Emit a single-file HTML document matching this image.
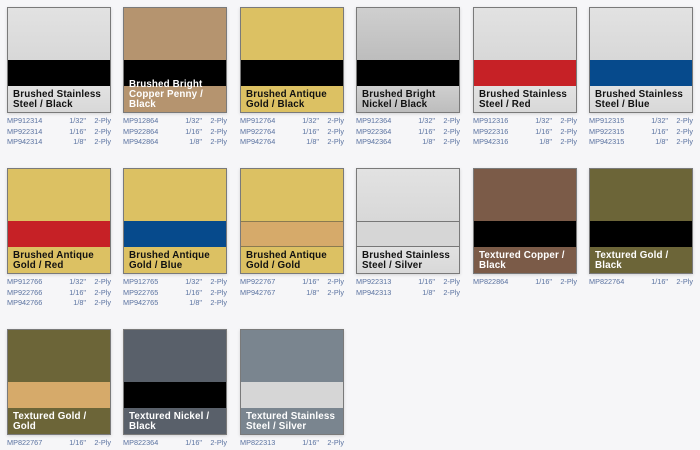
<!DOCTYPE html>
<html><head><meta charset="utf-8"><style>
body{margin:0;width:700px;height:450px;background:#f6f6f8;position:relative;overflow:hidden;font-family:"Liberation Sans",sans-serif}
.t{position:absolute;width:102px;height:104px;border:1px solid #7a7a7a;box-shadow:0 1px 3px rgba(0,0,0,.15);overflow:hidden}
.top{position:absolute;left:0;top:0;width:100%;height:52px}
.band{position:absolute;left:0;top:52px;width:100%;height:26px}
.bot{position:absolute;left:0;top:78px;width:100%;height:26px}
.lab{position:absolute;left:5px;bottom:2px;font-weight:bold;font-size:9.8px;line-height:10px;color:#111;letter-spacing:.15px}
.w{color:#fff}
.i{position:absolute;width:104px;font-size:7.3px;color:#5a72a0;line-height:10.5px}
.i div{position:relative;height:10.5px}
.i span{position:absolute}
.a{left:0}.b{right:25px}.c{right:0}
.ss{background:linear-gradient(#e2e2e2,#d8d8d8)}
.cp{background:#b5946f}
.gd{background:#dcc163}
.nk{background:linear-gradient(#cfcfcf,#bdbdbd)}
.bk{background:#000}
.tc{background:#7b5b48}
.tg{background:#6c6538}
.tn{background:#59606a}
.ts{background:#7a858f}
</style></head><body>

<div class="t" style="left:7px;top:7px"><div class="top ss"></div><div class="band bk"></div><div class="bot ss"></div><div class="lab">Brushed Stainless<br>Steel / Black</div></div>
<div class="t" style="left:123px;top:7px"><div class="top cp"></div><div class="band bk"></div><div class="bot cp"></div><div class="lab w">Brushed Bright<br>Copper Penny /<br>Black</div></div>
<div class="t" style="left:240px;top:7px"><div class="top gd"></div><div class="band bk"></div><div class="bot gd"></div><div class="lab">Brushed Antique<br>Gold / Black</div></div>
<div class="t" style="left:356px;top:7px"><div class="top nk"></div><div class="band bk"></div><div class="bot nk"></div><div class="lab">Brushed Bright<br>Nickel / Black</div></div>
<div class="t" style="left:473px;top:7px"><div class="top ss"></div><div class="band" style="background:#c62126"></div><div class="bot ss"></div><div class="lab">Brushed Stainless<br>Steel / Red</div></div>
<div class="t" style="left:589px;top:7px"><div class="top ss"></div><div class="band" style="background:#064a8c"></div><div class="bot ss"></div><div class="lab">Brushed Stainless<br>Steel / Blue</div></div>

<div class="i" style="left:7px;top:116px"><div><span class="a">MP912314</span><span class="b">1/32"</span><span class="c">2-Ply</span></div><div><span class="a">MP922314</span><span class="b">1/16"</span><span class="c">2-Ply</span></div><div><span class="a">MP942314</span><span class="b">1/8"</span><span class="c">2-Ply</span></div></div>
<div class="i" style="left:123px;top:116px"><div><span class="a">MP912864</span><span class="b">1/32"</span><span class="c">2-Ply</span></div><div><span class="a">MP922864</span><span class="b">1/16"</span><span class="c">2-Ply</span></div><div><span class="a">MP942864</span><span class="b">1/8"</span><span class="c">2-Ply</span></div></div>
<div class="i" style="left:240px;top:116px"><div><span class="a">MP912764</span><span class="b">1/32"</span><span class="c">2-Ply</span></div><div><span class="a">MP922764</span><span class="b">1/16"</span><span class="c">2-Ply</span></div><div><span class="a">MP942764</span><span class="b">1/8"</span><span class="c">2-Ply</span></div></div>
<div class="i" style="left:356px;top:116px"><div><span class="a">MP912364</span><span class="b">1/32"</span><span class="c">2-Ply</span></div><div><span class="a">MP922364</span><span class="b">1/16"</span><span class="c">2-Ply</span></div><div><span class="a">MP942364</span><span class="b">1/8"</span><span class="c">2-Ply</span></div></div>
<div class="i" style="left:473px;top:116px"><div><span class="a">MP912316</span><span class="b">1/32"</span><span class="c">2-Ply</span></div><div><span class="a">MP922316</span><span class="b">1/16"</span><span class="c">2-Ply</span></div><div><span class="a">MP942316</span><span class="b">1/8"</span><span class="c">2-Ply</span></div></div>
<div class="i" style="left:589px;top:116px"><div><span class="a">MP912315</span><span class="b">1/32"</span><span class="c">2-Ply</span></div><div><span class="a">MP922315</span><span class="b">1/16"</span><span class="c">2-Ply</span></div><div><span class="a">MP942315</span><span class="b">1/8"</span><span class="c">2-Ply</span></div></div>

<div class="t" style="left:7px;top:168px"><div class="top gd"></div><div class="band" style="background:#c62126"></div><div class="bot gd"></div><div class="lab">Brushed Antique<br>Gold / Red</div></div>
<div class="t" style="left:123px;top:168px"><div class="top gd"></div><div class="band" style="background:#064a8c"></div><div class="bot gd"></div><div class="lab">Brushed Antique<br>Gold / Blue</div></div>
<div class="t" style="left:240px;top:168px"><div class="top gd"></div><div class="band" style="background:#d6aa6a;border-top:1px solid #8a7a50;border-bottom:1px solid #8a7a50;box-sizing:border-box"></div><div class="bot gd"></div><div class="lab">Brushed Antique<br>Gold / Gold</div></div>
<div class="t" style="left:356px;top:168px"><div class="top ss"></div><div class="band" style="background:#d6d6d6;border-top:1px solid #777;border-bottom:1px solid #777;box-sizing:border-box"></div><div class="bot ss"></div><div class="lab">Brushed Stainless<br>Steel / Silver</div></div>
<div class="t" style="left:473px;top:168px"><div class="top tc"></div><div class="band bk"></div><div class="bot tc"></div><div class="lab w">Textured Copper /<br>Black</div></div>
<div class="t" style="left:589px;top:168px"><div class="top tg"></div><div class="band bk"></div><div class="bot tg"></div><div class="lab w">Textured Gold /<br>Black</div></div>

<div class="i" style="left:7px;top:277px"><div><span class="a">MP912766</span><span class="b">1/32"</span><span class="c">2-Ply</span></div><div><span class="a">MP922766</span><span class="b">1/16"</span><span class="c">2-Ply</span></div><div><span class="a">MP942766</span><span class="b">1/8"</span><span class="c">2-Ply</span></div></div>
<div class="i" style="left:123px;top:277px"><div><span class="a">MP912765</span><span class="b">1/32"</span><span class="c">2-Ply</span></div><div><span class="a">MP922765</span><span class="b">1/16"</span><span class="c">2-Ply</span></div><div><span class="a">MP942765</span><span class="b">1/8"</span><span class="c">2-Ply</span></div></div>
<div class="i" style="left:240px;top:277px"><div><span class="a">MP922767</span><span class="b">1/16"</span><span class="c">2-Ply</span></div><div><span class="a">MP942767</span><span class="b">1/8"</span><span class="c">2-Ply</span></div></div>
<div class="i" style="left:356px;top:277px"><div><span class="a">MP922313</span><span class="b">1/16"</span><span class="c">2-Ply</span></div><div><span class="a">MP942313</span><span class="b">1/8"</span><span class="c">2-Ply</span></div></div>
<div class="i" style="left:473px;top:277px"><div><span class="a">MP822864</span><span class="b">1/16"</span><span class="c">2-Ply</span></div></div>
<div class="i" style="left:589px;top:277px"><div><span class="a">MP822764</span><span class="b">1/16"</span><span class="c">2-Ply</span></div></div>

<div class="t" style="left:7px;top:329px"><div class="top tg"></div><div class="band" style="background:#d6aa6a"></div><div class="bot tg"></div><div class="lab w">Textured Gold /<br>Gold</div></div>
<div class="t" style="left:123px;top:329px"><div class="top tn"></div><div class="band bk"></div><div class="bot tn"></div><div class="lab w">Textured Nickel /<br>Black</div></div>
<div class="t" style="left:240px;top:329px"><div class="top ts"></div><div class="band" style="background:#d6d6d6"></div><div class="bot ts"></div><div class="lab w">Textured Stainless<br>Steel / Silver</div></div>

<div class="i" style="left:7px;top:438px"><div><span class="a">MP822767</span><span class="b">1/16"</span><span class="c">2-Ply</span></div></div>
<div class="i" style="left:123px;top:438px"><div><span class="a">MP822364</span><span class="b">1/16"</span><span class="c">2-Ply</span></div></div>
<div class="i" style="left:240px;top:438px"><div><span class="a">MP822313</span><span class="b">1/16"</span><span class="c">2-Ply</span></div></div>

</body></html>
